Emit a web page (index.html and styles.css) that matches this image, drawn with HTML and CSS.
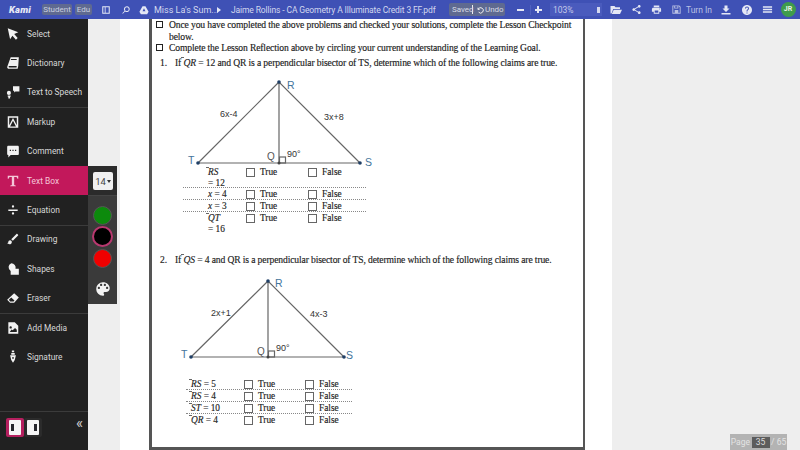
FILE: index.html
```html
<!DOCTYPE html>
<html lang="en">
<head>
<meta charset="utf-8">
<title>Kami</title>
<link rel="stylesheet" href="styles.css">
</head>
<body>
<header class="topbar">
  <span class="logo">Kami</span>
  <span class="chip chip-student">Student</span>
  <span class="chip chip-edu">Edu</span>
  <svg class="tb-icon panel-icon" viewBox="0 0 24 24"><path d="M3 3h18v18H3zM5.500 5.500v13H9v-13zM11 5.500v13h7.500v-13z" fill-rule="evenodd"/></svg>
  <svg class="tb-icon search-icon" viewBox="0 0 24 24"><path d="M14 3a7 7 0 1 1-4.200 12.600L4.500 21 3 19.500l5.400-5.300A7 7 0 0 1 14 3zm0 2.500a4.500 4.500 0 1 0 0 9 4.500 4.500 0 0 0 0-9z" fill-rule="evenodd"/></svg>
  <svg class="tb-icon drive-icon" viewBox="0 0 24 24"><path d="M8.500 3h7L23 16l-3.500 6h-15L1 16zM12 8l-3.500 7h7z" fill-rule="evenodd"/></svg>
  <span class="crumb crumb-folder">Miss La's Sum...</span>
  <span class="crumb-arrow"></span>
  <span class="crumb crumb-file">Jaime Rollins - CA Geometry A Illuminate Credit 3 FF.pdf</span>
  <span class="saved"><span class="saved-label">Saved</span><span class="saved-undo"><svg class="undo-icon" viewBox="0 0 24 24"><path d="M6 5v5h5M6.500 10A8 8 0 1 1 8 18.500" fill="none" stroke="#eee" stroke-width="3"/></svg>Undo</span></span>
  <span class="zoom-btn zoom-minus"></span>
  <span class="zoom-sep"></span>
  <span class="zoom-btn zoom-plus"></span>
  <span class="zoom-select"><span>103%</span><span class="zoom-updown"></span></span>
  <svg class="tb-icon folder-icon" viewBox="0 0 24 24"><path d="M1 4h8l2 2.500h9V10H6.500L3 19H1zM7.500 11.500H24L20 20H3.500z"/></svg>
  <svg class="tb-icon share-icon" viewBox="0 0 24 24"><path d="M18 16.080c-.76 0-1.440.3-1.960.77L8.910 12.700c.05-.23.09-.46.09-.7s-.04-.47-.09-.7l7.050-4.110c.54.5 1.250.81 2.040.81 1.660 0 3-1.340 3-3s-1.340-3-3-3-3 1.340-3 3c0 .24.04.47.09.7L8.040 9.810C7.500 9.310 6.790 9 6 9c-1.660 0-3 1.340-3 3s1.340 3 3 3c.79 0 1.500-.31 2.040-.81l7.120 4.160c-.05.21-.08.43-.08.65 0 1.610 1.310 2.920 2.920 2.920 1.610 0 2.920-1.310 2.920-2.920s-1.310-2.920-2.920-2.920z"/></svg>
  <svg class="tb-icon print-icon" viewBox="0 0 24 24"><path d="M19 8H5c-1.660 0-3 1.340-3 3v6h4v4h12v-4h4v-6c0-1.660-1.340-3-3-3zm-3 11H8v-5h8v5zm3-7c-.55 0-1-.45-1-1s.45-1 1-1 1 .45 1 1-.45 1-1 1zm-1-9H6v4h12V3z"/></svg>
  <svg class="tb-icon save-icon" viewBox="0 0 24 24"><path d="M3 3h15l3 3v15H3zM5 5v14h14V7l-2-2h-1v5H7V5zM9 5v3h5V5zM8 13h8v6H8z" fill-rule="evenodd"/></svg>
  <span class="turn-in">Turn In</span>
  <svg class="tb-icon download-icon" viewBox="0 0 24 24"><path d="M19 9h-4V3H9v6H5l7 7 7-7zM3 18v3h18v-3z"/></svg>
  <svg class="tb-icon help-icon" viewBox="0 0 24 24"><path d="M12 2C6.480 2 2 6.480 2 12s4.480 10 10 10 10-4.480 10-10S17.520 2 12 2zm1 17h-2v-2h2v2zm2.070-7.750l-.9.92C13.450 12.900 13 13.500 13 15h-2v-.5c0-1.100.45-2.100 1.170-2.830l1.240-1.260c.37-.36.59-.86.59-1.410 0-1.100-.9-2-2-2s-2 .9-2 2H8c0-2.210 1.790-4 4-4s4 1.790 4 4c0 .88-.36 1.680-.93 2.250z"/></svg>
  <svg class="tb-icon menu-icon" viewBox="0 0 24 24"><path d="M2 19h20v-3H2zM2 13.500h20v-3H2zM2 5v3h20V5z"/></svg>
  <span class="avatar">JR</span>
</header>

<div class="workspace">
  <nav class="sidebar">
    <div class="tool"><svg class="tool-icon" viewBox="0 0 24 24"><path d="M3 2l18 7-7 3 6 7-3 3-6-7-4 6z"/></svg><span>Select</span></div>
    <div class="tool"><svg class="tool-icon" viewBox="0 0 24 24"><path d="M8 2h14l-1 15-1 5H5c-2 0-3-1-3-3zM8.500 5l-.3 2h10l.3-2zM4.500 18c0 1 .5 1.500 1.500 1.500h12l.4-2.500H6c-1 0-1.500.2-1.500 1z" fill-rule="evenodd"/></svg><span>Dictionary</span></div>
    <div class="tool"><svg class="tool-icon" viewBox="0 0 24 24"><path d="M12 2h11v9h-7l-2 2v-3h-2zM5 10a3.500 3.500 0 1 1 0 7 3.500 3.500 0 0 1 0-7zM3 18h5v2H7v3H4v-3H3z"/></svg><span>Text to Speech</span></div>
    <div class="tool tool-divided"><svg class="tool-icon" viewBox="0 0 24 24"><path d="M3 2h18v20H3zM5.500 4.500v13L12 5l6.500 12.500v-13zM12 10l-5 9.500h10z" fill-rule="evenodd"/></svg><span>Markup</span></div>
    <div class="tool"><svg class="tool-icon" viewBox="0 0 24 24"><path d="M4 3h16c1 0 2 1 2 2v12c0 1-1 2-2 2H8l-4 4v-4c-1 0-2-1-2-2V5c0-1 1-2 2-2zM6.500 10v2h2v-2zM11 10v2h2v-2zM15.500 10v2h2v-2z" fill-rule="evenodd"/></svg><span>Comment</span></div>
    <div class="tool tool-active"><svg class="tool-icon" viewBox="0 0 24 24"><path d="M3 3h18v5h-1.500c-.5-2-1-3-3-3H14v14l3 1v1H7v-1l3-1V5H7.500c-2 0-2.500 1-3 3H3z"/></svg><span>Text Box</span></div>
    <div class="tool"><svg class="tool-icon" viewBox="0 0 24 24"><path d="M4 11h16v2.500H4zM12 4a2 2 0 1 1 0 4 2 2 0 0 1 0-4zM12 16a2 2 0 1 1 0 4 2 2 0 0 1 0-4z"/></svg><span>Equation</span></div>
    <div class="tool tool-divided"><svg class="tool-icon" viewBox="0 0 24 24"><path d="M7 14c-1.660 0-3 1.340-3 3 0 1.310-1.160 2-2 2 .92 1.220 2.490 2 4 2 2.210 0 4-1.790 4-4 0-1.660-1.340-3-3-3zm13.710-9.370l-1.340-1.340c-.39-.39-1.020-.39-1.410 0L9 12.250 11.750 15l8.960-8.960c.39-.39.39-1.020 0-1.410z"/></svg><span>Drawing</span></div>
    <div class="tool"><svg class="tool-icon" viewBox="0 0 24 24"><path d="M9 2a7.500 7.500 0 0 1 7.300 9.500H22V22H8v-6.700A7.500 7.500 0 0 1 9 2z"/></svg><span>Shapes</span></div>
    <div class="tool"><svg class="tool-icon" viewBox="0 0 24 24"><path d="M14 4l8 7-8 9H7l-5-5zM7 18h6l1.500-1.800-5.500-5L5 15z" fill-rule="evenodd"/></svg><span>Eraser</span></div>
    <div class="tool tool-divided"><svg class="tool-icon" viewBox="0 0 24 24"><path d="M4 2h11l6 6v14H4zM8 9a2 2 0 1 0 0 4 2 2 0 0 0 0-4zM6.500 19h12v-4l-3-3-4 4-2-1.500z" fill-rule="evenodd"/></svg><span>Add Media</span></div>
    <div class="tool"><svg class="tool-icon" viewBox="0 0 24 24"><path d="M10 1h4v3h-4zM9 5h6v3H9zM7 9h10l-2 8-3 5-3-5zM12 12a1.500 1.500 0 1 0 0 3 1.500 1.500 0 0 0 0-3z" fill-rule="evenodd"/></svg><span>Signature</span></div>
    <div class="side-footer">
      <span class="view-toggle view-on"><span class="view-page"><span class="view-mark"></span></span></span>
      <span class="view-toggle"><span class="view-page view-page-r"><span class="view-mark"></span></span></span>
      <span class="collapse">«</span>
    </div>
  </nav>

  <aside class="colours">
    <div class="size-wrap"><span class="size-select">14<span class="size-caret"></span></span></div>
    <div class="swatches">
      <span class="swatch swatch-green"></span>
      <span class="swatch swatch-black"></span>
      <span class="swatch swatch-red"></span>
      <svg class="palette" viewBox="0 0 24 24"><path d="M12 3c-4.970 0-9 4.030-9 9s4.030 9 9 9c.83 0 1.500-.67 1.500-1.500 0-.39-.15-.74-.39-1.010-.23-.26-.38-.61-.38-.99 0-.83.67-1.500 1.500-1.500H16c2.760 0 5-2.240 5-5 0-4.420-4.030-8-9-8zm-5.500 9c-.83 0-1.500-.67-1.500-1.500S5.670 9 6.500 9 8 9.670 8 10.500 7.330 12 6.500 12zm3-4C8.670 8 8 7.330 8 6.500S8.670 5 9.500 5s1.500.67 1.500 1.500S10.330 8 9.500 8zm5 0c-.83 0-1.500-.67-1.500-1.500S13.670 5 14.500 5s1.500.67 1.500 1.500S15.330 8 14.500 8zm3 4c-.83 0-1.500-.67-1.500-1.500S16.670 9 17.500 9s1.500.67 1.500 1.500-.67 1.500-1.500 1.500z"/></svg>
    </div>
  </aside>

  <main class="viewer">
    <div class="sheet">
      <article class="doc">
        <div class="check"><span class="check-box"></span><p>Once you have completed the above problems and checked your solutions, complete the Lesson Checkpoint below.</p></div>
        <div class="check"><span class="check-box"></span><p>Complete the Lesson Reflection above by circling your current understanding of the Learning Goal.</p></div>
        <p class="question q-one"><span class="q-num">1.</span>If <i class="over">QR</i> = 12 and QR is a perpendicular bisector of TS, determine which of the following claims are true.</p>
        <svg class="diagram d-one" width="200" height="92" viewBox="0 0 200 92">
          <g stroke="#666" stroke-width="1.200" fill="none">
            <path d="M97 4L16 85H178ZM97 4V85"/>
            <rect x="97.500" y="79" width="6" height="6"/>
          </g>
          <circle cx="97" cy="4" r="1.800" fill="#1f3f66"/><circle cx="16" cy="85" r="1.800" fill="#1f3f66"/><circle cx="178" cy="85" r="1.800" fill="#1f3f66"/><circle cx="97" cy="85" r="1.500" fill="#444"/>
          <text class="pt" x="105" y="11">R</text><text class="pt" x="6" y="86">T</text><text class="pt" x="183" y="88">S</text>
          <text class="lb" x="38" y="39">6x-4</text><text class="lb" x="142" y="42">3x+8</text>
          <text class="lb lb-q" x="85" y="82">Q</text><text class="lb" x="105" y="79">90°</text>
        </svg>
        <div class="claims claims-one">
          <div class="claim claim-tall"><span class="c-expr"><i class="over">RS</i><br>= 12</span><span class="c-box"></span><span class="c-true">True</span><span class="c-box"></span><span class="c-false">False</span></div>
          <div class="claim"><span class="c-expr"><i>x</i> = 4</span><span class="c-box"></span><span class="c-true">True</span><span class="c-box"></span><span class="c-false">False</span></div>
          <div class="claim"><span class="c-expr"><i>x</i> = 3</span><span class="c-box"></span><span class="c-true">True</span><span class="c-box"></span><span class="c-false">False</span></div>
          <div class="claim claim-tall claim-last"><span class="c-expr"><i class="over">QT</i><br>= 16</span><span class="c-box"></span><span class="c-true">True</span><span class="c-box"></span><span class="c-false">False</span></div>
        </div>
        <p class="question q-two"><span class="q-num">2.</span>If <i class="over">QS</i> = 4 and QR is a perpendicular bisector of TS, determine which of the following claims are true.</p>
        <svg class="diagram d-two" width="200" height="92" viewBox="0 0 200 92">
          <g stroke="#666" stroke-width="1.200" fill="none">
            <path d="M85 4L8 80H161ZM85 4V80"/>
            <rect x="85.500" y="74" width="6" height="6"/>
          </g>
          <circle cx="85" cy="4" r="1.800" fill="#1f3f66"/><circle cx="8" cy="80" r="1.800" fill="#1f3f66"/><circle cx="161" cy="80" r="1.800" fill="#1f3f66"/><circle cx="85" cy="80" r="1.500" fill="#444"/>
          <text class="pt" x="92" y="10">R</text><text class="pt" x="-2" y="81">T</text><text class="pt" x="163" y="82">S</text>
          <text class="lb" x="28" y="39">2x+1</text><text class="lb" x="127" y="40">4x-3</text>
          <text class="lb lb-q" x="74" y="78">Q</text><text class="lb" x="93" y="74">90°</text>
        </svg>
        <div class="claims claims-two">
          <div class="claim"><span class="c-expr"><i class="over">RS</i> = 5</span><span class="c-box"></span><span class="c-true">True</span><span class="c-box"></span><span class="c-false">False</span></div>
          <div class="claim"><span class="c-expr"><i class="over">RS</i> = 4</span><span class="c-box"></span><span class="c-true">True</span><span class="c-box"></span><span class="c-false">False</span></div>
          <div class="claim"><span class="c-expr"><i class="over">ST</i> = 10</span><span class="c-box"></span><span class="c-true">True</span><span class="c-box"></span><span class="c-false">False</span></div>
          <div class="claim claim-last"><span class="c-expr"><i class="over">QR</i> = 4</span><span class="c-box"></span><span class="c-true">True</span><span class="c-box"></span><span class="c-false">False</span></div>
        </div>
      </article>
    </div>
    <div class="pager"><span>Page</span><span class="pager-num">35</span><span>/ 65</span></div>
  </main>
</div>
</body>
</html>
```

FILE: styles.css
```css
* { box-sizing: border-box; }
html, body { margin: 0; padding: 0; }
body {
  width: 800px;
  height: 450px;
  overflow: hidden;
  display: flex;
  flex-direction: column;
  font-family: Roboto, sans-serif;
  background: #eee;
}

/* top bar */
.topbar {
  position: relative;
  height: 19px;
  flex: none;
  display: flex;
  align-items: center;
  background: #3f51b5;
  color: #d3d8ef;
  font-size: 9px;
  white-space: nowrap;
}
.topbar > * { flex: none; }
.logo {
  margin-left: 9px;
  width: 33px;
  font-weight: 900;
  font-style: italic;
  font-size: 9.500px;
  letter-spacing: .2px;
  color: #e8eaf6;
}
.chip {
  height: 11px;
  line-height: 11px;
  background: #5f6a90;
  border-radius: 2px;
  color: #c9cfe0;
  font-size: 8px;
  text-align: center;
}
.chip-student { width: 30px; }
.chip-edu { width: 17px; margin-left: 3px; }
.tb-icon { width: 10px; height: 10px; fill: #e4e7f5; }
.panel-icon { margin-left: 9px; }
.search-icon { margin-left: 10px; }
.drive-icon { margin-left: 8px; }
.crumb-folder { margin-left: 5px; width: 60px; }
.crumb-arrow {
  margin-left: 3px;
  border-left: 4px solid #e4e7f5;
  border-top: 3px solid transparent;
  border-bottom: 3px solid transparent;
}
.crumb-file { margin-left: 10px; width: 204px; font-size: 8.500px; letter-spacing: -.12px; }
.saved {
  margin-left: 14px;
  width: 56px;
  height: 13px;
  display: flex;
  align-items: center;
  background: #5f6a90;
  border-radius: 2px;
  font-size: 8px;
  color: #d8dbe6;
}
.saved-label { width: 24px; padding-left: 3px; border-right: 1px solid #eee; }
.saved-undo { display: flex; align-items: center; margin-left: 3px; }
.undo-icon { width: 8px; height: 8px; margin-right: 1px; }
.zoom-btn { position: relative; width: 7px; height: 2px; background: #e4e7f5; }
.zoom-minus { margin-left: 12px; }
.zoom-sep { width: 1px; height: 10px; margin-left: 5.500px; background: #5163c0; }
.zoom-plus { margin-left: 4px; }
.zoom-plus::after {
  content: "";
  position: absolute;
  left: 2.500px;
  top: -2.500px;
  width: 2px;
  height: 7px;
  background: #e4e7f5;
}
.zoom-select {
  margin-left: 8.500px;
  width: 52px;
  height: 13px;
  padding: 0 0 0 3px;
  display: flex;
  align-items: center;
  justify-content: space-between;
  background: #4a5bbd;
  font-size: 8.500px;
  color: #c5cae9;
}
.zoom-updown { width: 3px; height: 6px; margin-right: 2px; background: #d3d8ef; }
.folder-icon { width: 12px; height: 12px; margin-left: 8px; }
.share-icon { width: 11px; height: 11px; margin-left: 8.500px; }
.print-icon { width: 11px; height: 11px; margin-left: 9px; }
.save-icon { width: 11px; height: 11px; margin-left: 9px; fill: #b9c0e3; }
.turn-in { margin-left: 4.500px; width: 24px; font-size: 8.500px; color: #b9c0e3; }
.download-icon { width: 12px; height: 12px; margin-left: 10px; }
.help-icon { width: 12px; height: 12px; margin-left: 9px; }
.menu-icon { width: 11px; height: 11px; margin-left: 8.500px; }
.avatar {
  width: 15px;
  height: 15px;
  margin-left: 8px;
  border-radius: 50%;
  background: #3f9b4c;
  color: #e8f5e9;
  font-size: 7px;
  font-weight: 700;
  line-height: 15px;
  text-align: center;
}

/* workspace */
.workspace { position: relative; flex: 1; display: flex; min-height: 0; }
.sidebar {
  position: relative;
  width: 88px;
  flex: none;
  background: #212121;
  color: #d8d8d8;
  font-size: 8.400px;
}
.tool {
  height: 29.400px;
  display: flex;
  align-items: center;
  padding-left: 6px;
  gap: 7px;
  white-space: nowrap;
}
.tool-icon { width: 14px; height: 14px; fill: #f2f2f2; flex: none; }
.tool-divided { box-shadow: inset 0 1px 0 #3b3b3b; }
.tool-active { background: #c2185b; color: #f4c6d8; }
.tool-active .tool-icon { fill: #f4c6d8; }
.side-footer {
  position: absolute;
  left: 0;
  right: 0;
  top: 392px;
  height: 39px;
  border-top: 1px solid #3b3b3b;
  padding: 6px 0 0 6px;
  display: flex;
  align-items: flex-start;
}
.view-toggle {
  width: 18px;
  height: 19px;
  padding: 2px 3px;
  background: #2b2b2b;
  border-radius: 2px;
}
.view-on { background: #b5205f; }
.view-page {
  display: flex;
  align-items: center;
  height: 100%;
  padding-left: 2px;
  background: #f5f5f5;
  border-radius: 1px;
}
.view-page-r { justify-content: flex-end; padding: 0 2px 0 0; }
.view-mark { width: 3px; height: 7px; background: #26262c; }
.collapse {
  margin-left: 34px;
  margin-top: -2px;
  font-size: 15px;
  line-height: 15px;
  color: #cfcfcf;
}

/* colour panel */
.colours {
  position: absolute;
  z-index: 2;
  left: 88px;
  top: 147px;
  width: 29px;
  height: 138px;
  background: #3a3a3a;
}
.size-wrap { height: 30px; padding: 6px 0 0 5px; background: #2b2b2b; border-bottom: 1px solid #444; }
.size-select {
  display: flex;
  align-items: center;
  justify-content: center;
  width: 20px;
  height: 18px;
  background: #f0f0f0;
  border-radius: 2px;
  color: #444;
  font-size: 9.500px;
}
.size-caret {
  margin-left: 1px;
  border-top: 3px solid #333;
  border-left: 2.500px solid transparent;
  border-right: 2.500px solid transparent;
}
.swatches { display: flex; flex-direction: column; align-items: center; padding-top: 10px; }
.swatch { width: 19px; height: 19px; border-radius: 50%; margin-bottom: 3px; border: 1px solid #555; flex: none; }
.swatch-green { background: #0c8a0c; margin-bottom: 2px; }
.swatch-black { width: 21px; height: 21px; margin-bottom: 2px; margin-top: -1px; background: #000; border: 2px solid #b8386f; }
.swatch-red { background: #f00000; }
.palette { width: 18px; height: 18px; margin-top: 9px; fill: #f4f4f4; }

/* document viewer */
.viewer { position: relative; flex: 1; min-width: 0; padding-left: 32px; background: #eeeeee; }
.sheet { width: 492px; height: 100%; padding-left: 29px; background: #fff; }
.doc {
  width: 436px;
  height: 100%;
  padding: 0 4px 0 4px;
  border-left: 3px solid #555;
  border-right: 2px solid #555;
  border-bottom: 3px solid #555;
  font-family: "Liberation Serif", serif;
  font-size: 9.600px;
  letter-spacing: -.125px;
  -webkit-text-stroke: .15px #1c1c1c;
  color: #1c1c1c;
}
.doc p { margin: 0; line-height: 11.500px; }
.check { display: flex; gap: 6px; }
.check-box { width: 7px; height: 7px; margin-top: 2px; border: 1.500px solid #222; flex: none; }
.question { padding-left: 4px; }
.q-num { display: inline-block; width: 15px; }
.doc .q-one { margin-top: 3px; }
.doc .q-two { margin-top: 20px; }
.over { position: relative; }
.over::before {
  content: "";
  position: absolute;
  left: -2px;
  top: 0;
  width: 3px;
  height: 1px;
  background: #666;
}
.diagram { display: block; overflow: visible; }
.d-one { margin: 10px 0 0 26px; }
.d-two { margin: 11.500px 0 0 27px; }
.pt { font: 10.500px "Liberation Sans", sans-serif; fill: #43749b; stroke: none; -webkit-text-stroke: 0; }
.lb { font: 9px "Liberation Sans", sans-serif; letter-spacing: 0; fill: #333; stroke: none; -webkit-text-stroke: 0; }
.lb-q { font-size: 10px; fill: #555; }
.claims-one { width: 183px; margin: -4px 0 0 27px; }
.claims-two { width: 166px; margin: 9px 0 0 30px; }
.claim {
  display: flex;
  height: 12px;
  line-height: 12px;
  border-bottom: 1px dotted #888;
  font-size: 9.300px;
  letter-spacing: 0;
}
.claim-tall { height: 22px; }
.claim-last { border-bottom: 0; }
.c-expr { width: 63px; padding-left: 25px; flex: none; }
.claim-tall .c-expr { line-height: 11px; padding-top: 1px; }
.c-box { width: 9px; height: 9px; margin-top: 2px; border: 1.200px solid #666; flex: none; }
.c-true { width: 53px; padding-left: 5px; flex: none; }
.c-false { padding-left: 5px; }
.claims-two .c-expr { width: 58px; padding-left: 5px; }
.claims-two .c-true { width: 52px; padding-left: 5px; }

.pager {
  position: absolute;
  right: 13px;
  bottom: 0;
  width: 57px;
  height: 16px;
  display: flex;
  align-items: center;
  justify-content: space-around;
  background: #b3b3b3;
  color: #e3e3e3;
  font-size: 8.500px;
}
.pager-num { width: 18px; height: 11px; line-height: 11px; text-align: center; background: #5c5c5c; color: #ddd; }
```
